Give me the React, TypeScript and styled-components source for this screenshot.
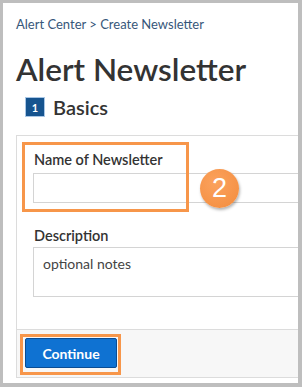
import React from "react";
import styled, { createGlobalStyle } from "styled-components";

const Global = createGlobalStyle`
  html, body { margin: 0; padding: 0; background: #fff; }
  body { font-family: "Lato", "Open Sans", sans-serif; color: #333; }
  * { box-sizing: border-box; }
`;

const Frame = styled.div`
  position: relative;
  width: 302px;
  height: 387px;
  border-style: solid;
  border-color: #bebebe;
  border-width: 3px 4px 4px 3px;
  background: #fff;
  overflow: hidden;
`;

const Content = styled.div`
  padding: 12px 0 0 13px;
  width: 320px;
`;

const Breadcrumb = styled.div`
  font-size: 13px;
  line-height: 18px;
  color: #37577a;
`;

const Title = styled.h1`
  margin: 18px 0 0;
  font-size: 31.5px;
  line-height: 36px;
  font-weight: 600;
  color: #333;
`;

const StepRow = styled.div`
  display: flex;
  align-items: center;
  gap: 9px;
  margin: 8px 0 0 10px;
`;

const StepNum = styled.span`
  width: 18px;
  height: 18px;
  background: #16548f;
  outline: 1px solid #a9c7e6;
  color: #fff;
  font-size: 11px;
  font-weight: 700;
  display: flex;
  align-items: center;
  justify-content: center;
`;

const StepTitle = styled.span`
  font-size: 20px;
  font-weight: 600;
  color: #333;
`;

const Panel = styled.div`
  margin-top: 16px;
  border: 1px solid #dcdcdc;
  width: 320px;
`;

const PanelBody = styled.div`
  padding: 14px 0 32px 17px;
  display: flex;
  flex-direction: column;
`;

const Label = styled.label<{ $first?: boolean }>`
  font-size: 14.5px;
  font-weight: 600;
  color: #333;
  line-height: 20px;
  margin-top: ${(p) => (p.$first ? "0" : "23px")};
`;

const Input = styled.div`
  margin-top: 3px;
  margin-left: -1px;
  height: 30px;
  border: 1px solid #d4d4d4;
  background: #fff;
`;

const TextArea = styled.div`
  margin-top: 1px;
  margin-left: -1px;
  height: 50px;
  border: 1px solid #d4d4d4;
  padding: 7px 9px;
  font-size: 14px;
  line-height: 17px;
  color: #444;
`;

const Footer = styled.div`
  border-top: 1px solid #dcdcdc;
  background: #f7f7f7;
  height: 48px;
  padding: 8px 0 0 8px;
`;

const Button = styled.button`
  width: 92px;
  height: 30px;
  background: #0f72d2;
  border: 1px solid #0a4c93;
  border-radius: 2px;
  color: #fff;
  font-family: inherit;
  font-size: 14px;
  font-weight: 700;
`;

const Highlight = styled.div<{ $x: number; $y: number; $w: number; $h: number }>`
  position: absolute;
  left: ${(p) => p.$x}px;
  top: ${(p) => p.$y}px;
  width: ${(p) => p.$w}px;
  height: ${(p) => p.$h}px;
  border: 3px solid #f7964a;
  pointer-events: none;
`;

const Badge = styled.div`
  position: absolute;
  left: 197px;
  top: 166px;
  width: 39px;
  height: 39px;
  border-radius: 50%;
  background: radial-gradient(circle at 40% 35%, #fba25e, #f38c3c);
  box-shadow: 1px 2px 3px rgba(0, 0, 0, 0.3);
  color: #fff;
  font-family: "Liberation Sans", Arial, sans-serif;
  font-size: 27px;
  display: flex;
  align-items: center;
  justify-content: center;
`;

export default function App() {
  return (
    <>
      <Global />
      <Frame>
        <Content>
          <Breadcrumb>Alert Center &gt; Create Newsletter</Breadcrumb>
          <Title>Alert Newsletter</Title>
          <StepRow>
            <StepNum>1</StepNum>
            <StepTitle>Basics</StepTitle>
          </StepRow>
          <Panel>
            <PanelBody>
              <Label $first>Name of Newsletter</Label>
              <Input />
              <Label>Description</Label>
              <TextArea>optional notes</TextArea>
            </PanelBody>
            <Footer>
              <Button>Continue</Button>
            </Footer>
          </Panel>
        </Content>
        <Highlight $x={19} $y={139} $w={167} $h={70} />
        <Highlight $x={17} $y={331} $w={101} $h={41} />
        <Badge>2</Badge>
      </Frame>
    </>
  );
}
